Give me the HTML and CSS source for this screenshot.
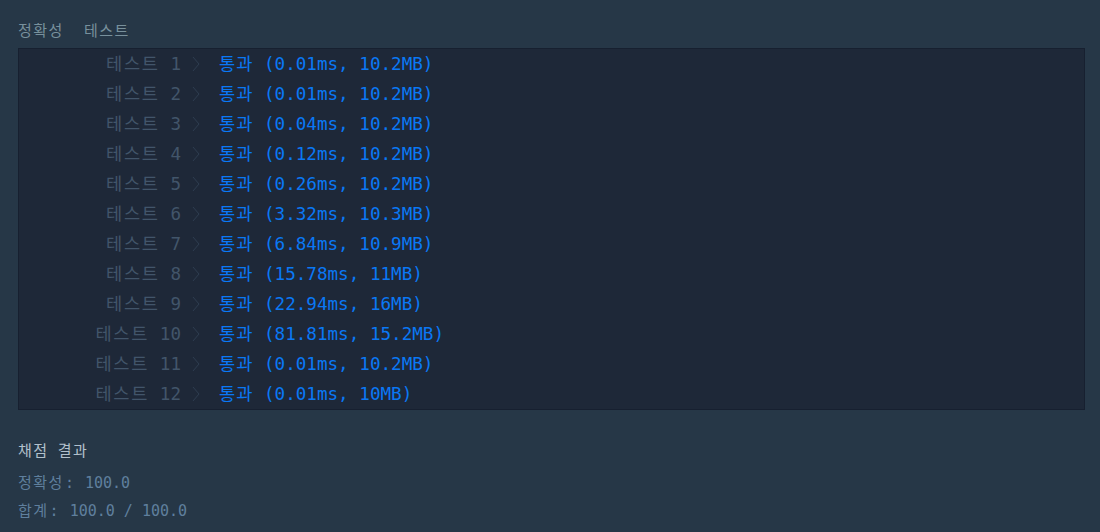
FILE: index.html
```html
<!DOCTYPE html>
<html lang="ko">
<head>
<meta charset="utf-8">
<link rel="stylesheet" href="styles.css">
</head>
<body>
<div class="page">
  <div class="section-title"><span class="ko">정확성</span><span class="ko">테스트</span></div>
  <div class="console">
    <div class="row"><span class="label"><span class="ko">테스트</span> 1</span><span class="sep"><svg viewBox="0 0 8 16"><polyline points="1,1 7,8 1,15"/></svg></span><span class="pass"><span class="ok">통과</span> (0.01ms, 10.2MB)</span></div>
    <div class="row"><span class="label"><span class="ko">테스트</span> 2</span><span class="sep"><svg viewBox="0 0 8 16"><polyline points="1,1 7,8 1,15"/></svg></span><span class="pass"><span class="ok">통과</span> (0.01ms, 10.2MB)</span></div>
    <div class="row"><span class="label"><span class="ko">테스트</span> 3</span><span class="sep"><svg viewBox="0 0 8 16"><polyline points="1,1 7,8 1,15"/></svg></span><span class="pass"><span class="ok">통과</span> (0.04ms, 10.2MB)</span></div>
    <div class="row"><span class="label"><span class="ko">테스트</span> 4</span><span class="sep"><svg viewBox="0 0 8 16"><polyline points="1,1 7,8 1,15"/></svg></span><span class="pass"><span class="ok">통과</span> (0.12ms, 10.2MB)</span></div>
    <div class="row"><span class="label"><span class="ko">테스트</span> 5</span><span class="sep"><svg viewBox="0 0 8 16"><polyline points="1,1 7,8 1,15"/></svg></span><span class="pass"><span class="ok">통과</span> (0.26ms, 10.2MB)</span></div>
    <div class="row"><span class="label"><span class="ko">테스트</span> 6</span><span class="sep"><svg viewBox="0 0 8 16"><polyline points="1,1 7,8 1,15"/></svg></span><span class="pass"><span class="ok">통과</span> (3.32ms, 10.3MB)</span></div>
    <div class="row"><span class="label"><span class="ko">테스트</span> 7</span><span class="sep"><svg viewBox="0 0 8 16"><polyline points="1,1 7,8 1,15"/></svg></span><span class="pass"><span class="ok">통과</span> (6.84ms, 10.9MB)</span></div>
    <div class="row"><span class="label"><span class="ko">테스트</span> 8</span><span class="sep"><svg viewBox="0 0 8 16"><polyline points="1,1 7,8 1,15"/></svg></span><span class="pass"><span class="ok">통과</span> (15.78ms, 11MB)</span></div>
    <div class="row"><span class="label"><span class="ko">테스트</span> 9</span><span class="sep"><svg viewBox="0 0 8 16"><polyline points="1,1 7,8 1,15"/></svg></span><span class="pass"><span class="ok">통과</span> (22.94ms, 16MB)</span></div>
    <div class="row"><span class="label"><span class="ko">테스트</span> 10</span><span class="sep"><svg viewBox="0 0 8 16"><polyline points="1,1 7,8 1,15"/></svg></span><span class="pass"><span class="ok">통과</span> (81.81ms, 15.2MB)</span></div>
    <div class="row"><span class="label"><span class="ko">테스트</span> 11</span><span class="sep"><svg viewBox="0 0 8 16"><polyline points="1,1 7,8 1,15"/></svg></span><span class="pass"><span class="ok">통과</span> (0.01ms, 10.2MB)</span></div>
    <div class="row"><span class="label"><span class="ko">테스트</span> 12</span><span class="sep"><svg viewBox="0 0 8 16"><polyline points="1,1 7,8 1,15"/></svg></span><span class="pass"><span class="ok">통과</span> (0.01ms, 10MB)</span></div>
  </div>
  <div class="result-title"><span class="ko">채점</span> <span class="ko">결과</span></div>
  <div class="result-line"><span class="ko">정확성</span><span class="colon">:</span> 100.0</div>
  <div class="result-line"><span class="ko">합계</span><span class="colon">:</span> 100.0 / 100.0</div>
</div>
</body>
</html>
```

FILE: styles.css
```css
html, body {
  margin: 0;
  padding: 0;
  background: #263747;
}
body {
  font-family: "DejaVu Sans Mono", "Noto Sans CJK KR", monospace;
  height: 532px;
  overflow: hidden;
}
.page {
  padding: 20px 15px 0 18px;
}
.ko {
  letter-spacing: 0.1em;
}
.ok {
  letter-spacing: 1px;
}
.colon {
  padding-left: 1px;
  padding-right: 2px;
}
.section-title {
  display: flex;
  gap: 20px;
  font-size: 15px;
  line-height: 22px;
  color: #78909c;
  height: 22px;
  margin-bottom: 6px;
}
.console {
  background: #1e2838;
  border: 1px solid #172030;
  width: 1067px;
  box-sizing: border-box;
}
.row {
  display: grid;
  grid-template-columns: 162px 38px 1fr;
  height: 30px;
  line-height: 26px;
  align-items: center;
  font-size: 17.6px;
  white-space: pre;
}
.label {
  text-align: right;
  color: #42556a;
}
.sep {
  display: flex;
  align-items: center;
  padding-left: 11px;
}
.sep svg {
  width: 8px;
  height: 16px;
  fill: none;
  stroke: #2e3d50;
  stroke-width: 1;
}
.pass {
  color: #0a78f5;
}
.result-title {
  margin-top: 30px;
  font-size: 15px;
  line-height: 22px;
  color: #b2c0cc;
}
.result-line {
  margin-top: 10px;
  font-size: 15px;
  line-height: 22px;
  color: #5f7f9d;
}
.result-line + .result-line {
  margin-top: 6px;
}
```
